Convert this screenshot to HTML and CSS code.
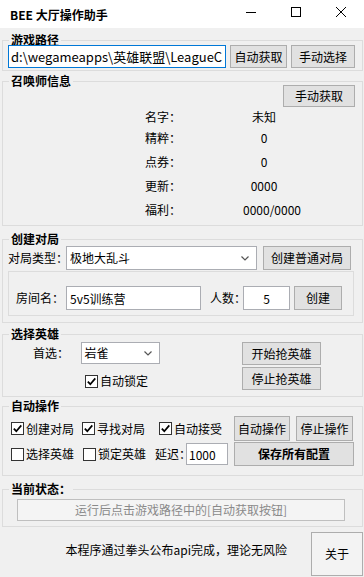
FILE: index.html
```html
<!DOCTYPE html>
<html lang="zh-CN">
<head>
    <meta charset="UTF-8">
    <meta name="viewport" content="width=device-width, initial-scale=1.0">
    <title>BEE 大厅操作助手</title>
    <link rel="stylesheet" href="styles.css">
</head>
<body>
    <div class="window">
        <div class="titlebar">
            <span class="app-title">BEE 大厅操作助手</span>
            <div class="win-controls">
                <span class="win-btn">
                    <svg width="10" height="10" viewBox="0 0 10 10"><path d="M0 5.5H10" stroke="#000" stroke-width="1"/></svg>
                </span>
                <span class="win-btn">
                    <svg width="10" height="10" viewBox="0 0 10 10"><rect x="0.5" y="0.5" width="9" height="9" fill="none" stroke="#000" stroke-width="1"/></svg>
                </span>
                <span class="win-btn">
                    <svg width="10" height="10" viewBox="0 0 10 10"><path d="M0 0L10 10M10 0L0 10" stroke="#000" stroke-width="1"/></svg>
                </span>
            </div>
        </div>

        <!-- 游戏路径 -->
        <section class="group g-path">
            <div class="group-title">游戏路径</div>
            <div class="group-body path-row">
                <input class="textbox path-box" type="text" value="d:\wegameapps\英雄联盟\LeagueClient\">
                <button class="btn btn-auto">自动获取</button>
                <button class="btn btn-choose">手动选择</button>
            </div>
        </section>

        <!-- 召唤师信息 -->
        <section class="group g-summoner">
            <div class="group-title">召唤师信息</div>
            <div class="group-body">
                <div class="summoner-head">
                    <button class="btn btn-fetch">手动获取</button>
                </div>
                <div class="summoner-grid">
                    <span>名字：</span><span class="info-value">未知</span>
                    <span>精粹：</span><span class="info-value">0</span>
                    <span>点券：</span><span class="info-value">0</span>
                    <span>更新：</span><span class="info-value">0000</span>
                    <span>福利：</span><span class="info-value shift">0000/0000</span>
                </div>
            </div>
        </section>

        <!-- 创建对局 -->
        <section class="group g-create">
            <div class="group-title">创建对局</div>
            <div class="group-body">
                <div class="create-row">
                    <span class="lbl lbl-type">对局类型：</span>
                    <div class="combo combo-type">
                        <span>极地大乱斗</span>
                        <svg width="8" height="5" viewBox="0 0 8 5"><path d="M0.5 0.5L4 4L7.5 0.5" fill="none" stroke="#555" stroke-width="1.2"/></svg>
                    </div>
                    <button class="btn btn-normal">创建普通对局</button>
                </div>
                <div class="room-box">
                    <span class="lbl lbl-room">房间名：</span>
                    <input class="textbox room-name" type="text" value="5v5训练营">
                    <span class="lbl lbl-count">人数：</span>
                    <input class="textbox room-count" type="text" value="5">
                    <button class="btn btn-create">创建</button>
                </div>
            </div>
        </section>

        <!-- 选择英雄 -->
        <section class="group g-pick">
            <div class="group-title">选择英雄</div>
            <div class="group-body pick-body">
                <div class="pick-left">
                    <div class="pick-row">
                        <span class="lbl lbl-first">首选：</span>
                        <div class="combo combo-hero">
                            <span>岩雀</span>
                            <svg width="8" height="5" viewBox="0 0 8 5"><path d="M0.5 0.5L4 4L7.5 0.5" fill="none" stroke="#555" stroke-width="1.2"/></svg>
                        </div>
                    </div>
                    <label class="check check-lock">
                        <span class="box"><svg width="11" height="11" viewBox="0 0 11 11"><path d="M1.8 5.6L4.3 8.2L9.3 2.4" fill="none" stroke="#000" stroke-width="1.7"/></svg></span>
                        自动锁定
                    </label>
                </div>
                <div class="pick-buttons">
                    <button class="btn btn-grab">开始抢英雄</button>
                    <button class="btn btn-grab">停止抢英雄</button>
                </div>
            </div>
        </section>

        <!-- 自动操作 -->
        <section class="group g-auto">
            <div class="group-title">自动操作</div>
            <div class="group-body">
                <div class="auto-row first">
                    <label class="check w71">
                        <span class="box"><svg width="11" height="11" viewBox="0 0 11 11"><path d="M1.8 5.6L4.3 8.2L9.3 2.4" fill="none" stroke="#000" stroke-width="1.7"/></svg></span>
                        创建对局
                    </label>
                    <label class="check w77">
                        <span class="box"><svg width="11" height="11" viewBox="0 0 11 11"><path d="M1.8 5.6L4.3 8.2L9.3 2.4" fill="none" stroke="#000" stroke-width="1.7"/></svg></span>
                        寻找对局
                    </label>
                    <label class="check w75">
                        <span class="box"><svg width="11" height="11" viewBox="0 0 11 11"><path d="M1.8 5.6L4.3 8.2L9.3 2.4" fill="none" stroke="#000" stroke-width="1.7"/></svg></span>
                        自动接受
                    </label>
                    <button class="btn btn-op">自动操作</button>
                    <button class="btn btn-op wide">停止操作</button>
                </div>
                <div class="auto-row second">
                    <label class="check w72">
                        <span class="box"></span>
                        选择英雄
                    </label>
                    <label class="check w72">
                        <span class="box"></span>
                        锁定英雄
                    </label>
                    <span class="lbl lbl-delay">延迟：</span>
                    <input class="textbox delay" type="text" value="1000">
                    <button class="btn btn-save">保存所有配置</button>
                </div>
            </div>
        </section>

        <!-- 当前状态 -->
        <section class="group g-status">
            <div class="group-title">当前状态：</div>
            <div class="group-body">
                <div class="status-box">运行后点击游戏路径中的[自动获取按钮]</div>
            </div>
        </section>

        <div class="footer">
            <span class="footer-note">本程序通过拳头公布api完成，理论无风险</span>
            <button class="btn btn-about">关于</button>
        </div>
    </div>
</body>
</html>
```

FILE: styles.css
```css
:root {
    --bg: #f0f0f0;
    --group-line: #dcdcdc;
    --btn-bg: #e1e1e1;
    --btn-border: #adadad;
    --input-border: #abadb3;
    --focus: #0078d7;
}

* {
    box-sizing: border-box;
}

body {
    margin: 0;
    font-family: "Noto Sans CJK SC", "Noto Sans", sans-serif;
    font-size: 12px;
    line-height: 16px;
    color: #000;
    background: var(--bg);
}

.window {
    width: 364px;
    height: 577px;
    overflow: hidden;
    background: var(--bg);
}

/* 标题栏 */
.titlebar {
    height: 28px;
    background: #fff;
    display: flex;
    align-items: flex-start;
    padding-left: 10px;
}

.app-title {
    margin-top: 7px;
    font-weight: bold;
}

.win-controls {
    margin-left: auto;
    margin-right: 1px;
    display: flex;
}

.win-btn {
    width: 45px;
    height: 24px;
    display: flex;
    align-items: center;
    justify-content: center;
}

/* 分组框 */
.group {
    border: 1px solid var(--group-line);
    margin: 11px 1px 0 2px;
}

.group-title {
    width: fit-content;
    margin: -8px 0 -4px 6px;
    padding: 0 2px;
    height: 14px;
    line-height: 14px;
    background: var(--bg);
    font-weight: bold;
}

.btn {
    font: inherit;
    color: #000;
    background: var(--btn-bg);
    border: 1px solid var(--btn-border);
    border-radius: 0;
    padding: 0;
    margin: 0;
    white-space: nowrap;
}

.textbox {
    font: inherit;
    color: #000;
    background: #fff;
    border: 1px solid var(--input-border);
    border-radius: 0;
    padding: 0 3px;
    margin: 0;
    outline: none;
}

.lbl {
    white-space: nowrap;
}

.combo {
    background: #fff;
    border: 1px solid var(--input-border);
    display: flex;
    align-items: center;
    justify-content: space-between;
    padding: 0 7px 0 3px;
}

/* 游戏路径 */
.g-path {
    margin-top: 12px;
}

.path-row {
    display: flex;
    gap: 4px;
    height: 23px;
    box-sizing: content-box;
    padding: 2px 0 2px 5px;
}

.path-box {
    width: 218px;
    font-size: 13px;
    border-color: var(--focus);
    padding: 0 2px;
}

.btn-auto {
    width: 57px;
}

.btn-choose {
    width: 64px;
}

/* 召唤师信息 */
.g-summoner {
    margin-top: 10px;
}

.g-summoner .group-body {
    padding: 1px 7px 3px 0;
}

.summoner-head {
    display: flex;
    justify-content: flex-end;
}

.btn-fetch {
    width: 72px;
    height: 22px;
}

.summoner-grid {
    display: grid;
    grid-template-columns: 60px 118px;
    grid-template-rows: 18px repeat(4, 24px);
    align-items: center;
    margin: 1px 0 0 142px;
}

.info-value {
    text-align: center;
}

.info-value.shift {
    padding-left: 16px;
}

/* 创建对局 */
.g-create {
    margin-top: 13px;
}

.g-create .group-body {
    padding: 4px 0 6px 5px;
}

.create-row {
    display: flex;
    align-items: center;
    height: 24px;
}

.lbl-type {
    width: 58px;
}

.combo-type {
    width: 191px;
    height: 24px;
}

.btn-normal {
    width: 88px;
    height: 24px;
    margin-left: 6px;
}

.room-box {
    margin-top: 1px;
    width: 346px;
    border: 1px solid var(--group-line);
    padding: 14px 0 5px 7px;
    display: flex;
    align-items: center;
}

.room-box > * {
    flex-shrink: 0;
}

.lbl-room {
    width: 50px;
}

.room-name {
    width: 135px;
    height: 24px;
}

.lbl-count {
    width: 33px;
    margin-left: 9px;
}

.room-count {
    width: 47px;
    height: 24px;
    text-align: center;
}

.btn-create {
    width: 48px;
    height: 24px;
    margin-left: 4px;
}

/* 选择英雄 */
.pick-body {
    display: flex;
    padding: 5px 0 6px 30px;
}

.pick-left {
    width: 127px;
}

.pick-row {
    display: flex;
    align-items: center;
    height: 22px;
}

.lbl-first {
    width: 48px;
}

.combo-hero {
    width: 80px;
    height: 22px;
}

.check-lock {
    margin: 9px 0 0 52px;
}

.pick-buttons {
    display: flex;
    flex-direction: column;
    gap: 2px;
    margin-left: 82px;
}

.btn-grab {
    width: 79px;
    height: 23px;
}

/* 复选框 */
.check {
    display: flex;
    align-items: center;
    height: 16px;
    white-space: nowrap;
    flex-shrink: 0;
}

.check .box {
    width: 13px;
    height: 13px;
    border: 1px solid #333;
    background: #fff;
    margin-right: 2px;
    display: flex;
}

.w71 { width: 71px; }
.w72 { width: 72px; }
.w75 { width: 75px; }
.w77 { width: 77px; }

/* 自动操作 */
.g-auto {
    margin-top: 9px;
}

.g-auto .group-body {
    padding: 7px 0 9px 8px;
}

.auto-row {
    display: flex;
    align-items: center;
}

.auto-row.first {
    height: 25px;
}

.auto-row.second {
    height: 24px;
    margin-top: 1px;
}

.btn-op {
    width: 56px;
    height: 25px;
}

.btn-op.wide {
    width: 57px;
    margin-left: 6px;
}

.lbl-delay {
    width: 31px;
}

.delay {
    width: 42px;
    height: 22px;
    padding: 0 2px;
}

.btn-save {
    width: 120px;
    height: 24px;
    margin-left: 6px;
    font-weight: bold;
}

/* 当前状态 */
.g-status {
    margin-top: 13px;
}

.g-status .group-body {
    padding: 7px 0 5px 14px;
}

.status-box {
    width: 328px;
    height: 22px;
    border: 1px solid #bfbfbf;
    background: #f4f4f4;
    color: #8a8a8a;
    display: flex;
    align-items: center;
    justify-content: center;
}

/* 底部 */
.footer {
    display: flex;
    justify-content: flex-end;
    align-items: flex-start;
    height: 47px;
}

.footer-note {
    margin: 15px 24px 0 0;
}

.btn-about {
    width: 52px;
    height: 44px;
    margin-top: 5px;
    margin-right: 1px;
    background: #f3f3f3;
}
```
